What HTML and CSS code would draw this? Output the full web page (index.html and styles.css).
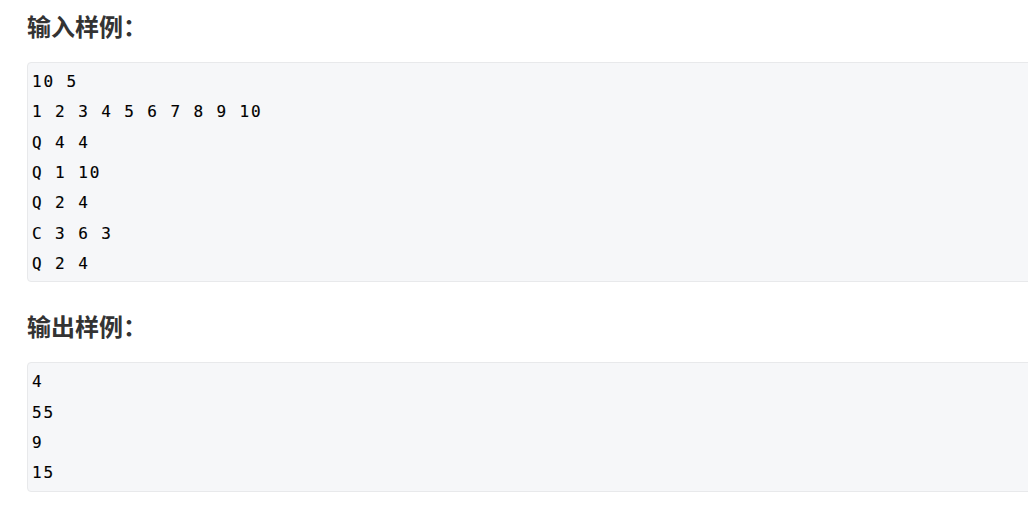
FILE: index.html
```html
<!DOCTYPE html>
<html lang="zh">
<head>
<meta charset="utf-8">
<link rel="stylesheet" href="styles.css">
</head>
<body>
<main class="page">
  <h3 class="title">输入样例：</h3>
  <pre class="sample">10 5
1 2 3 4 5 6 7 8 9 10
Q 4 4
Q 1 10
Q 2 4
C 3 6 3
Q 2 4</pre>
  <h3 class="title">输出样例：</h3>
  <pre class="sample">4
55
9
15</pre>
</main>
</body>
</html>
```

FILE: styles.css
```css
html, body {
  margin: 0;
  padding: 0;
  overflow: hidden;
  background: #ffffff;
}

.page {
  padding: 8px 0 0 27px;
  width: 1040px;
}

.title {
  margin: 0 0 18px 0;
  font-family: "Noto Sans CJK SC", "Noto Sans", sans-serif;
  font-size: 24px;
  font-weight: 700;
  line-height: 36px;
  color: #333333;
}

.sample {
  margin: 0 0 26px 0;
  padding: 4px 4px 2px 4px;
  background: #f6f7f9;
  border: 1px solid #e8e9eb;
  border-radius: 4px;
  font-family: "DejaVu Sans Mono", monospace;
  font-size: 16px;
  line-height: 30.33px;
  letter-spacing: 1.9px;
  color: #000000;
  white-space: pre;
  -webkit-text-stroke: 0.15px #000000;
}
```
